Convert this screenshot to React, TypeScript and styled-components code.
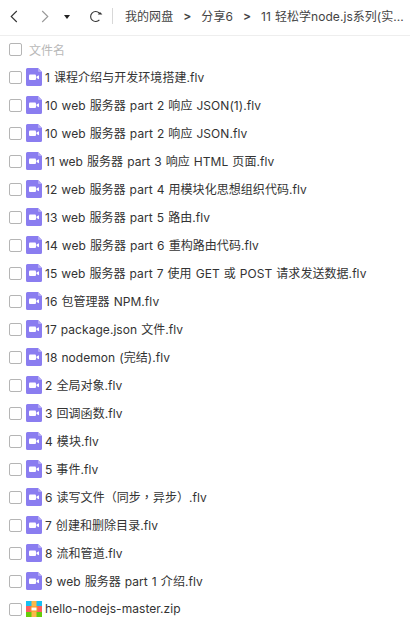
import styled, { createGlobalStyle } from "styled-components";

const GlobalStyle = createGlobalStyle`
  html, body {
    margin: 0;
    padding: 0;
    background: #fff;
    overflow: hidden;
  }
`;

const files = [
  "1 课程介绍与开发环境搭建.flv",
  "10 web 服务器 part 2 响应 JSON(1).flv",
  "10 web 服务器 part 2 响应 JSON.flv",
  "11 web 服务器 part 3 响应 HTML 页面.flv",
  "12 web 服务器 part 4 用模块化思想组织代码.flv",
  "13 web 服务器 part 5 路由.flv",
  "14 web 服务器 part 6 重构路由代码.flv",
  "15 web 服务器 part 7 使用 GET 或 POST 请求发送数据.flv",
  "16 包管理器 NPM.flv",
  "17 package.json 文件.flv",
  "18 nodemon (完结).flv",
  "2 全局对象.flv",
  "3 回调函数.flv",
  "4 模块.flv",
  "5 事件.flv",
  "6 读写文件（同步，异步）.flv",
  "7 创建和删除目录.flv",
  "8 流和管道.flv",
  "9 web 服务器 part 1 介绍.flv",
];

const crumbs = ["我的网盘", "分享6", "11 轻松学node.js系列(实..."];

const VideoIcon = () => (
  <svg width="16" height="18" viewBox="0 0 16 18">
    <path d="M1.5 0H12l4 4v12.5a1.5 1.5 0 0 1-1.5 1.5h-13A1.5 1.5 0 0 1 0 16.5v-15A1.5 1.5 0 0 1 1.5 0z" fill="#8a7df0" />
    <path d="M12 0l4 4h-3a1 1 0 0 1-1-1z" fill="#b3aaf6" />
    <rect x="3" y="6.5" width="7" height="5.5" rx="1" fill="#fff" />
    <path d="M10.5 8.6l2.5-1.4v4.1l-2.5-1.4z" fill="#fff" />
  </svg>
);

const ZipIcon = () => (
  <svg width="16" height="16" viewBox="0 0 16 16">
    <rect x="0" y="0" width="16" height="5" fill="#18bff2" />
    <rect x="0" y="5" width="16" height="6" fill="#fb5f5f" />
    <rect x="0" y="11" width="16" height="5" fill="#66cc0a" />
    <rect x="5.5" y="0" width="5" height="16" fill="#fdb849" />
    <rect x="5" y="6" width="6" height="4" fill="#fff" stroke="#f59a23" strokeWidth="1" />
  </svg>
);

const App = () => {
  return (
    <Page>
      <GlobalStyle />
      <Toolbar>
        <NavButtons>
          <svg width="8" height="13" viewBox="0 0 8 13">
            <path d="M6.8 1L1.2 6.5l5.6 5.5" fill="none" stroke="#333" strokeWidth="1.1" />
          </svg>
          <ForwardArrow width="8" height="13" viewBox="0 0 8 13">
            <path d="M1.2 1l5.6 5.5L1.2 12" fill="none" stroke="#999" strokeWidth="1.1" />
          </ForwardArrow>
          <Caret width="6" height="4" viewBox="0 0 6 4">
            <path d="M0 0h6L3 4z" fill="#222" />
          </Caret>
          <Refresh width="14" height="13" viewBox="0 0 14 13">
            <path d="M10.4 9.8A5 5 0 1 1 10.2 3" fill="none" stroke="#333" strokeWidth="1.1" />
            <path d="M8.8 4.6h4.6L11 2z" fill="#333" />
          </Refresh>
        </NavButtons>
        <Divider />
        <Breadcrumb>
          {crumbs.map((crumb, index) => (
            <Crumb key={crumb}>
              {index > 0 && <Separator>&gt;</Separator>}
              {crumb}
            </Crumb>
          ))}
        </Breadcrumb>
      </Toolbar>
      <HeaderRow>
        <Checkbox />
        <HeaderText>文件名</HeaderText>
      </HeaderRow>
      <FileList>
        {files.map((name) => (
          <FileRow key={name}>
            <Checkbox />
            <VideoIcon />
            <FileName $fullWidthMarks={name.includes("，")}>{name}</FileName>
          </FileRow>
        ))}
        <FileRow>
          <Checkbox />
          <ZipIcon />
          <FileName>hello-nodejs-master.zip</FileName>
        </FileRow>
      </FileList>
    </Page>
  );
};

const Page = styled.div`
  width: 410px;
  height: 633px;
  overflow: hidden;
  background: #fff;
  font-family: "Inter", "Noto Sans CJK SC", sans-serif;
  font-size: 12px;
  letter-spacing: 0.05px;
  word-spacing: 0.6px;
  color: #333;
`;

const Toolbar = styled.div`
  display: flex;
  align-items: center;
  height: 32px;
  padding-bottom: 3px;
  border-bottom: 1px solid #eeeeee;
`;

const NavButtons = styled.div`
  display: flex;
  align-items: center;
  padding-left: 10px;
`;

const ForwardArrow = styled.svg`
  margin-left: 23px;
`;

const Caret = styled.svg`
  margin-left: 15px;
  margin-top: 2px;
`;

const Refresh = styled.svg`
  margin-left: 19px;
`;

const Divider = styled.div`
  width: 1px;
  height: 16px;
  margin: 0 12px 0 9px;
  background: #d8d8d8;
`;

const Breadcrumb = styled.div`
  display: flex;
  align-items: center;
  white-space: nowrap;
  padding-bottom: 2px;
`;

const Crumb = styled.span`
  display: flex;
  align-items: center;
  color: #444;
`;

const Separator = styled.span`
  margin: 0 10px;
  font-weight: 600;
`;

const HeaderRow = styled.div`
  display: flex;
  align-items: center;
  gap: 7px;
  height: 27px;
  padding-left: 9px;
`;

const HeaderText = styled.span`
  padding-bottom: 1px;
  color: #b8b8b8;
`;

const FileList = styled.div`
  display: flex;
  flex-direction: column;
`;

const FileRow = styled.div`
  display: flex;
  align-items: center;
  gap: 4px;
  height: 28px;
  padding-left: 9px;
  flex-shrink: 0;
`;

const Checkbox = styled.span`
  box-sizing: border-box;
  width: 13px;
  height: 13px;
  border: 1px solid #b5b5b5;
  border-radius: 2px;
  background: #fff;
  flex-shrink: 0;
`;

const FileName = styled.span<{ $fullWidthMarks?: boolean }>`
  margin-left: -1px;
  padding-bottom: 2px;
  color: #333;
  white-space: nowrap;
  font-family: ${(props) =>
    props.$fullWidthMarks
      ? '"Inter", "Noto Sans CJK TC", sans-serif'
      : '"Inter", "Noto Sans CJK SC", sans-serif'};
`;

export default App;
